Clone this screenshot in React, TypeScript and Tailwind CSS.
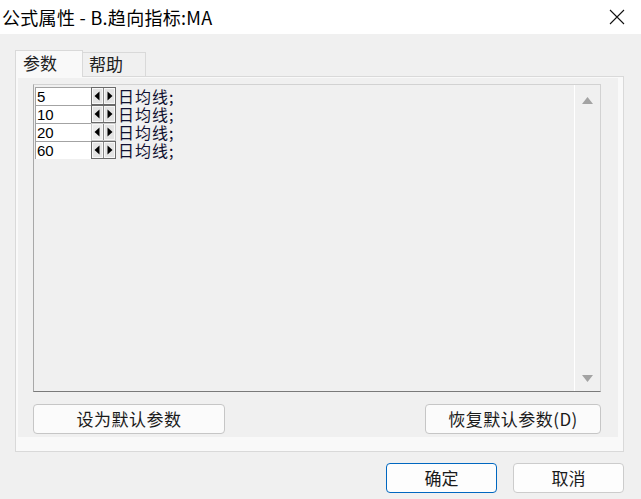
import React from "react";

const CJK = '"Noto Sans CJK SC", "Noto Sans", sans-serif';

function Spin({ pressed }: { pressed?: boolean }) {
  return (
    <svg width="25" height="18" viewBox="0 0 25 18" className="shrink-0 block">
      <rect x="0.5" y="0.5" width="24" height="17" fill="#e1e1e1" stroke={pressed ? "#c8c8c8" : "#6a6a6a"} />
      <rect x="1.5" y="1.5" width="10" height="15" fill={pressed ? "#ececec" : "#e4e4e4"} stroke="#f8f8f8" />
      <rect x="13.5" y="1.5" width="10" height="15" fill="#e4e4e4" stroke="#f8f8f8" />
      <line x1="12.5" y1="1" x2="12.5" y2="17" stroke="#8a8a8a" />
      <polygon points="3.5,9 8.5,4.5 8.5,13.5" fill="#000" />
      <polygon points="21.5,9 16.5,4.5 16.5,13.5" fill="#000" />
    </svg>
  );
}

function Row({ value, pressed }: { value: string; pressed?: boolean }) {
  return (
    <div className="flex items-center h-[18px]">
      <div
        className="w-[56px] h-[18px] bg-white border-t border-l border-[#a3a3a3] pl-[1px] text-[15px] leading-[17px] text-black"
        style={{ fontFamily: '"Liberation Sans", Arial, sans-serif' }}
      >
        {value}
      </div>
      <Spin pressed={pressed} />
      <div className="ml-[2px] h-[18px] text-[16px] leading-[18px] tracking-[1px] text-[#101030]" style={{ fontFamily: CJK }}>
        日均线;
      </div>
    </div>
  );
}

export default function App() {
  return (
    <div className="w-[641px] h-[499px] bg-[#f0f0f0] flex flex-col overflow-hidden" style={{ fontFamily: CJK }}>
      {/* Title bar */}
      <div className="h-[34px] bg-white flex items-center justify-between pl-[2px] pr-[16px] shrink-0">
        <span className="text-[18px] leading-[22px] tracking-[0.3px] text-black">公式属性 - B.趋向指标:MA</span>
        <svg width="16" height="16" viewBox="0 0 16 16">
          <path d="M1 1 L15 15 M15 1 L1 15" stroke="#111" strokeWidth="1.1" fill="none" />
        </svg>
      </div>

      {/* Tabs */}
      <div className="mt-[16px] ml-[15px] flex items-end h-[27px] shrink-0">
        <div className="relative z-10 w-[68px] h-[27px] bg-[#f9f9f9] border-t border-l border-r border-[#d9d9d9] flex items-start pl-[7px] pt-[1px] text-[17px] leading-[22px] text-[#202020]">
          参数
        </div>
        <div className="w-[63px] h-[25px] border-t border-r border-[#d9d9d9] flex items-start pl-[6px] text-[17px] leading-[22px] text-[#202020]">
          帮助
        </div>
      </div>

      {/* Tab page */}
      <div className="-mt-px ml-[15px] w-[609px] h-[376px] border border-[#d9d9d9] bg-[#f9f9f9] pt-[1px] pl-[2px] pr-[5px] pb-[14px] shrink-0 flex flex-col">
        <div className="flex-1 bg-[#f0f0f0] flex flex-col pl-[15px] pr-[17px] pt-[6px] pb-[2px]">
          {/* Edit area */}
          <div className="h-[308px] border-t border-r border-[#d2d2d2] border-l border-l-[#a8a8a8] border-b border-b-[#7a7a7a] flex">
            <div className="flex-1 pl-[1px] pt-[2px] flex flex-col">
              <Row value="5" />
              <Row value="10" />
              <Row value="20" pressed />
              <Row value="60" />
            </div>
            <div className="w-[26px] border-l border-white flex flex-col items-center justify-between pt-[12px] pb-[9px]">
              <svg width="11" height="7" viewBox="0 0 11 7">
                <polygon points="5.5,0 11,7 0,7" fill="#a3a3a3" />
              </svg>
              <svg width="11" height="7" viewBox="0 0 11 7">
                <polygon points="0,0 11,0 5.5,7" fill="#a3a3a3" />
              </svg>
            </div>
          </div>

          {/* Buttons */}
          <div className="mt-[12px] flex justify-between">
            <button className="w-[192px] h-[30px] rounded-[4px] border border-[#c6c6c6] bg-[#fbfbfb] text-[17px] leading-[20px] tracking-[0.5px] text-[#1a1a1a]">
              设为默认参数
            </button>
            <button className="w-[176px] h-[30px] rounded-[4px] border border-[#c6c6c6] bg-[#fbfbfb] text-[17px] leading-[20px] tracking-[0.5px] text-[#1a1a1a]">
              恢复默认参数(D)
            </button>
          </div>
        </div>
      </div>

      {/* Dialog buttons */}
      <div className="mt-[11px] flex justify-end gap-[16px] pr-[17px]">
        <button className="w-[111px] h-[30px] rounded-[4px] border border-[#0067c0] bg-[#fdfdfd] text-[17px] leading-[20px] text-[#1a1a1a]">
          确定
        </button>
        <button className="w-[111px] h-[30px] rounded-[4px] border border-[#cccccc] bg-[#fdfdfd] text-[17px] leading-[20px] text-[#1a1a1a]">
          取消
        </button>
      </div>
    </div>
  );
}
